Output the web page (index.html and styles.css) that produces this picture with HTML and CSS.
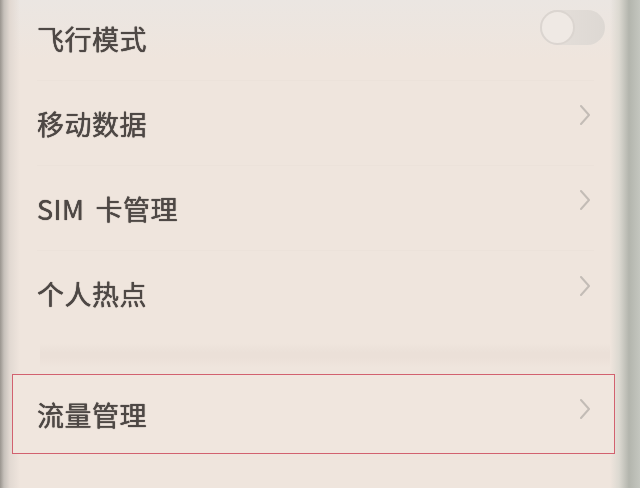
FILE: index.html
```html
<!DOCTYPE html>
<html lang="zh-CN">
<head>
<meta charset="utf-8">
<title>设置</title>
<link rel="stylesheet" href="styles.css">
</head>
<body>
<div class="screen">
  <div class="group">
    <div class="row">
      <span class="label">飞行模式</span>
      <span class="toggle"><span class="thumb"></span></span>
    </div>
    <div class="row">
      <span class="label">移动数据</span>
      <svg class="chev" viewBox="0 0 14 22" width="14" height="22"><path d="M3 2 L11 11 L3 20" fill="none" stroke="#c3bcb6" stroke-width="2" stroke-linecap="round" stroke-linejoin="round"/></svg>
    </div>
    <div class="row">
      <span class="label">SIM<span class="sp"> </span>卡管理</span>
      <svg class="chev" viewBox="0 0 14 22" width="14" height="22"><path d="M3 2 L11 11 L3 20" fill="none" stroke="#c3bcb6" stroke-width="2" stroke-linecap="round" stroke-linejoin="round"/></svg>
    </div>
    <div class="row last">
      <span class="label">个人热点</span>
      <svg class="chev" viewBox="0 0 14 22" width="14" height="22"><path d="M3 2 L11 11 L3 20" fill="none" stroke="#c3bcb6" stroke-width="2" stroke-linecap="round" stroke-linejoin="round"/></svg>
    </div>
  </div>
  <div class="gap"><div class="band"></div></div>
  <div class="row highlight">
    <span class="label">流量管理</span>
    <svg class="chev" viewBox="0 0 14 22" width="14" height="22"><path d="M3 2 L11 11 L3 20" fill="none" stroke="#c3bcb6" stroke-width="2" stroke-linecap="round" stroke-linejoin="round"/></svg>
  </div>
</div>
</body>
</html>
```
FILE: styles.css
```css
html, body {
  margin: 0;
  padding: 0;
}
body {
  width: 640px;
  height: 488px;
  overflow: hidden;
  background:
    linear-gradient(to right, #99948e 0, #c6c0ba 4px, #e2d9d2 10px, rgba(239,229,221,0) 20px, rgba(239,229,221,0) 610px, #dcd9d1 619px, #b3b5ad 629px, #c4c6bf 640px),
    linear-gradient(to bottom, #ebe6e2 0, #efe5dd 60px, #efe5dd 100%);
  font-family: "Noto Sans CJK SC", "Noto Sans", sans-serif;
  color: #4e4845;
}
.screen {
  display: flex;
  flex-direction: column;
  margin-top: -4px;
}
.group {
  display: flex;
  flex-direction: column;
}
.row {
  height: 85px;
  display: flex;
  align-items: center;
  justify-content: space-between;
  margin-left: 37px;
  margin-right: 46px;
  border-bottom: 1px solid #ece2da;
  box-sizing: border-box;
}
.row.last {
  border-bottom: none;
}
.label {
  font-size: 27px;
  line-height: 1;
  letter-spacing: 0.5px;
  text-shadow: 0 0 0.7px #4e4845, 0 0 0.7px #4e4845;
  filter: blur(0.3px);
}
.sp {
  display: inline-block;
  width: 11px;
}
.chev {
  display: block;
  margin-bottom: 16px;
  margin-right: 2px;
  filter: blur(0.4px);
}
.toggle {
  width: 65px;
  height: 35px;
  border-radius: 18px;
  background: linear-gradient(to right, #e6e0db, #ddd8d3);
  display: flex;
  align-items: center;
  margin-bottom: 21px;
  margin-right: -11px;
  filter: blur(0.6px);
}
.thumb {
  width: 31px;
  height: 31px;
  border-radius: 50%;
  background: #efe9e4;
  border: 2px solid #dbd5d0;
}
.gap {
  height: 38px;
  display: flex;
  flex-direction: column;
  justify-content: center;
}
.band {
  height: 24px;
  margin: 0 30px 0 40px;
  background: linear-gradient(to bottom, rgba(235,224,216,0), #ebe0d8 40%, #ebe0d8 60%, rgba(235,224,216,0));
}
.row.highlight {
  height: 80px;
  margin-left: 12px;
  margin-right: 25px;
  padding-left: 24px;
  padding-right: 20px;
  border: 1px solid #d2616f;
  background: #f0e6de;
}
.row.highlight .chev {
  margin-bottom: 10px;
}
```
